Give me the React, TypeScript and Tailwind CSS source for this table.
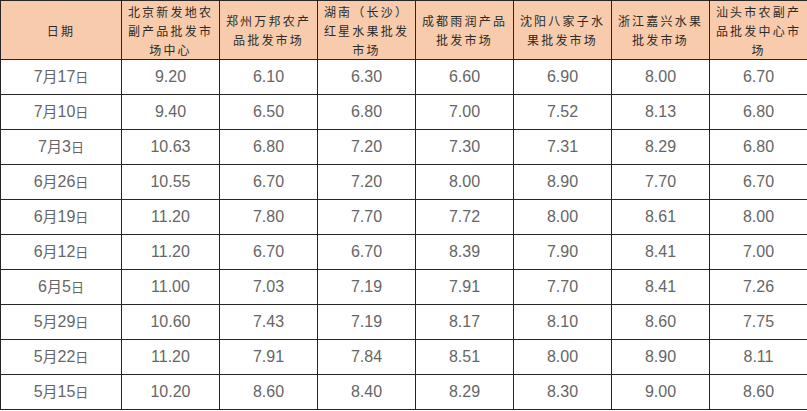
const headers = [
  ["日期"],
  ["北京新发地农", "副产品批发市", "场中心"],
  ["郑州万邦农产", "品批发市场"],
  ["湖南（长沙）", "红星水果批发", "市场"],
  ["成都雨润产品", "批发市场"],
  ["沈阳八家子水", "果批发市场"],
  ["浙江嘉兴水果", "批发市场"],
  ["汕头市农副产", "品批发中心市", "场"],
];

const rows = [
  ["7月17日", "9.20", "6.10", "6.30", "6.60", "6.90", "8.00", "6.70"],
  ["7月10日", "9.40", "6.50", "6.80", "7.00", "7.52", "8.13", "6.80"],
  ["7月3日", "10.63", "6.80", "7.20", "7.30", "7.31", "8.29", "6.80"],
  ["6月26日", "10.55", "6.70", "7.20", "8.00", "8.90", "7.70", "6.70"],
  ["6月19日", "11.20", "7.80", "7.70", "7.72", "8.00", "8.61", "8.00"],
  ["6月12日", "11.20", "6.70", "6.70", "8.39", "7.90", "8.41", "7.00"],
  ["6月5日", "11.00", "7.03", "7.19", "7.91", "7.70", "8.41", "7.26"],
  ["5月29日", "10.60", "7.43", "7.19", "8.17", "8.10", "8.60", "7.75"],
  ["5月22日", "11.20", "7.91", "7.84", "8.51", "8.00", "8.90", "8.11"],
  ["5月15日", "10.20", "8.60", "8.40", "8.29", "8.30", "9.00", "8.60"],
];

export default function App() {
  return (
    <div className="w-[807px] h-[411px] bg-white">
      <table className="table-fixed border-collapse w-[807px] font-['Liberation_Sans','Noto_Sans_CJK_SC',sans-serif]">
        <colgroup>
          <col className="w-[121px]" />
          {headers.slice(1).map((_, i) => (
            <col key={i} className="w-[98px]" />
          ))}
        </colgroup>
        <thead>
          <tr className="h-[59px] bg-[#f8cbad]">
            {headers.map((lines, i) => (
              <th
                key={i}
                className="border border-[#262626] p-0 text-center align-middle font-normal text-[12px] leading-[19px] tracking-[2.2px] text-[#2b2b2b] font-['Noto_Sans_CJK_SC',sans-serif]"
              >
                {lines.map((l, j) => (
                  <div key={j}>{l}</div>
                ))}
              </th>
            ))}
          </tr>
        </thead>
        <tbody>
          {rows.map((r, i) => (
            <tr key={i} className="h-[35px]">
              {r.map((c, j) => (
                <td
                  key={j}
                  className="border border-[#262626] p-0 text-center align-middle text-[16px] text-[#666]"
                >
                  {j === 0 ? <DateCell v={c} /> : c}
                </td>
              ))}
            </tr>
          ))}
        </tbody>
      </table>
    </div>
  );
}

function DateCell({ v }: { v: string }) {
  const m = v.match(/^(\d+)月(\d+)日$/);
  if (!m) return <>{v}</>;
  return (
    <span>
      {m[1]}
      <span className="text-[15px]">月</span>
      {m[2]}
      <span className="text-[13px]">日</span>
    </span>
  );
}
